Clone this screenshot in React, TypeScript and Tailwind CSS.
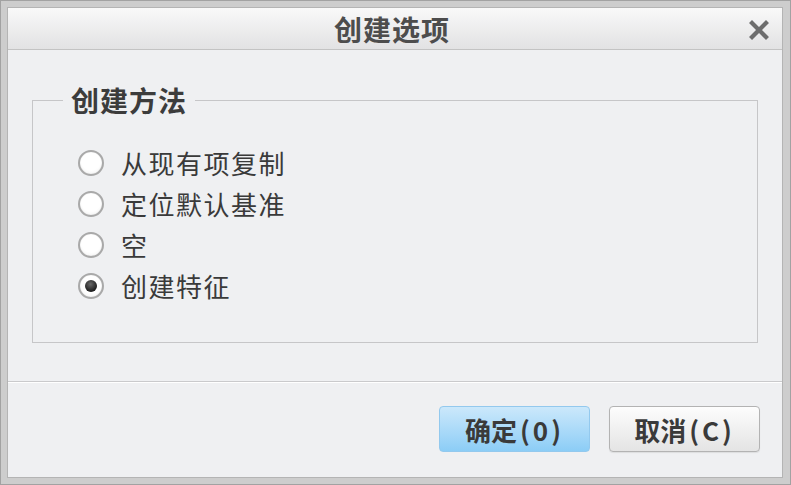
const options = ["从现有项复制", "定位默认基准", "空", "创建特征"];

const font = { fontFamily: '"Noto Sans CJK SC", "Noto Sans", sans-serif' };

const Radio = ({ checked }: { checked: boolean }) => (
  <span className="flex h-[26px] w-[26px] shrink-0 items-center justify-center rounded-full border-[2px] border-[#a9a9a9] bg-[radial-gradient(circle_at_50%_40%,#ffffff_55%,#ececec)] shadow-[inset_0_0_1px_#d0d0d0]">
    {checked && (
      <span className="h-[12px] w-[12px] rounded-full bg-[radial-gradient(circle_at_45%_35%,#6a6a6a,#1e1e1e_70%)]" />
    )}
  </span>
);

export default function App() {
  return (
    <div
      className="flex h-[485px] w-[791px] flex-col border border-[#a2a2a2] bg-[#cdcdcd] pb-[6px] pl-[6px] pr-[7px] pt-[6px]"
      style={font}
    >
      <div className="flex flex-1 flex-col border border-[#b4b4b4] bg-[#eff0f2]">
        {/* title bar */}
        <div className="relative flex h-[42px] items-center justify-center border-b border-[#c3c3c3] bg-gradient-to-b from-[#f9f9f9] to-[#e2e2e3]">
          <span className="pr-[6px] text-[28px] font-bold leading-none tracking-[1px] text-[#4d4d4d]">
            创建选项
          </span>
          <svg
            className="absolute right-[13px] top-[12px]"
            width="20"
            height="20"
            viewBox="0 0 20 20"
          >
            <path
              d="M3 3 L17 17 M17 3 L3 17"
              stroke="#6d6d6d"
              strokeWidth="4.2"
              strokeLinecap="square"
            />
          </svg>
        </div>

        {/* body */}
        <div className="h-[331px] px-[24px] pt-[32px]">
          <fieldset className="h-[261px] border-[1.5px] border-[#c6c6c8] pl-[30px] pr-0 pt-0">
            <legend className="px-[8px] text-[28px] font-bold leading-[36px] tracking-[1px] text-[#3c3c3c]">
              创建方法
            </legend>
            <div className="flex flex-col pl-[15px] pt-[24px]">
              {options.map((o, i) => (
                <div key={o} className="flex h-[41px] items-center gap-[17px]">
                  <Radio checked={i === 3} />
                  <span className="text-[26px] leading-none tracking-[1.5px] text-[#3a3a3a]">
                    {o}
                  </span>
                </div>
              ))}
            </div>
          </fieldset>
        </div>

        {/* footer */}
        <div className="flex-1 border-t border-[#cacacc]">
          <div className="flex h-full justify-end gap-[19px] border-t border-white pr-[22px] pt-[23px]">
            <button className="flex h-[46px] w-[151px] items-center justify-center rounded-[4px] border border-[#93c9ee] bg-gradient-to-b from-[#cbe8fb] to-[#8ccdf6] text-[26px] font-bold text-[#3a3a3a]">
              确定<span className="ml-[3px] tracking-[3px]">(0)</span>
            </button>
            <button className="flex h-[46px] w-[151px] items-center justify-center rounded-[4px] border border-[#b3b3b3] bg-gradient-to-b from-[#fdfdfd] to-[#e4e4e4] text-[26px] font-bold text-[#3a3a3a] shadow-[0_1px_1px_rgba(0,0,0,0.08)]">
              取消<span className="ml-[3px] tracking-[3px]">(C)</span>
            </button>
          </div>
        </div>
      </div>
    </div>
  );
}
